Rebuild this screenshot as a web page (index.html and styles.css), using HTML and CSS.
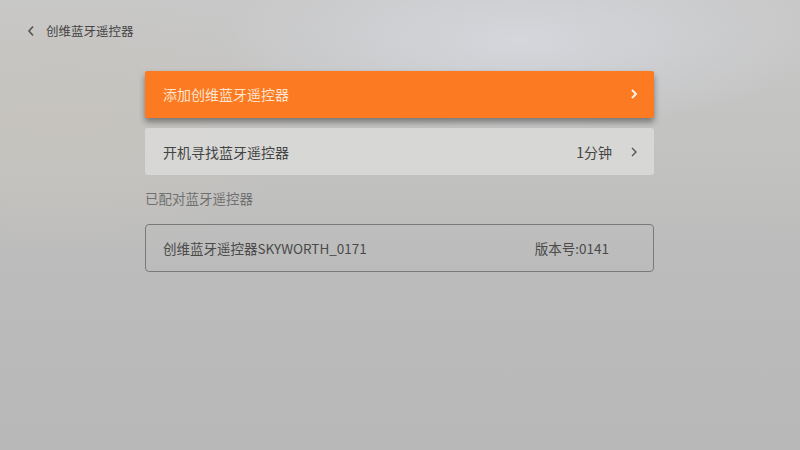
FILE: index.html
```html
<!DOCTYPE html>
<html lang="zh">
<head>
<meta charset="utf-8">
<link rel="stylesheet" href="styles.css">
</head>
<body>
<div class="screen">
  <header class="topbar">
    <svg class="back" width="8" height="12" viewBox="0 0 8 12"><path d="M6 1.5 L2 6 L6 10.5" fill="none" stroke="#555" stroke-width="1.6"/></svg>
    <span class="title">创维蓝牙遥控器</span>
  </header>
  <main class="content">
    <div class="row active">
      <span class="label">添加创维蓝牙遥控器</span>
      <svg class="chev" width="8" height="12" viewBox="0 0 8 12"><path d="M2 2 L6 6 L2 10" fill="none" stroke="#fff3e8" stroke-width="2"/></svg>
    </div>
    <div class="row plain">
      <span class="label">开机寻找蓝牙遥控器</span>
      <span class="value">1分钟</span>
      <svg class="chev" width="8" height="12" viewBox="0 0 8 12"><path d="M2 2 L6 6 L2 10" fill="none" stroke="#555" stroke-width="1.4"/></svg>
    </div>
    <div class="section">已配对蓝牙遥控器</div>
    <div class="row device">
      <span class="label">创维蓝牙遥控器SKYWORTH_0171</span>
      <span class="version">版本号:0141</span>
    </div>
  </main>
</div>
</body>
</html>
```
FILE: styles.css
```css
html, body { margin: 0; padding: 0; }
body {
  width: 800px; height: 450px; overflow: hidden;
  font-family: "Noto Sans CJK SC", Roboto, "Noto Sans", sans-serif;
}
.screen {
  width: 800px; height: 450px;
  background:
    radial-gradient(ellipse 300px 90px at 520px 40px, rgba(214,216,222,0.9), rgba(214,216,222,0) 100%),
    radial-gradient(ellipse 260px 140px at 60px 120px, rgba(200,196,188,0.7), rgba(200,196,188,0) 100%),
    linear-gradient(180deg, #c8c8c8 0%, #c2c2c1 35%, #bbbbbb 60%, #b8b8b8 100%);
}
.topbar {
  display: flex; align-items: flex-start;
  height: 63px; box-sizing: border-box;
  padding: 22px 0 0 27px;
}
.back { margin-right: 11px; margin-top: 3px; }
.title { font-size: 12.5px; color: #444; line-height: 18px; }
.content {
  width: 509px; margin-left: 145px;
  display: flex; flex-direction: column;
  margin-top: 8px;
}
.row {
  display: flex; align-items: center;
  height: 47px; box-sizing: border-box;
  padding: 0 16px 0 18px;
  font-size: 14px;
  border-radius: 3px;
}
.label { flex: 1; }
.active {
  background: #fb7a22;
  color: #ffe4cf;
  box-shadow: 0 4px 6px rgba(0,0,0,0.4);
  position: relative; z-index: 1;
  border-radius: 2px;
  padding-bottom: 2px;
}
.plain {
  margin-top: 10px;
  background: rgba(222,222,220,0.75);
  color: #444;
}
.plain .value { margin-right: 18px; }
.section {
  font-size: 13.5px; color: #707070;
  margin-top: 12px; height: 22px; line-height: 22px;
}
.device {
  margin-top: 15px;
  border: 1px solid #7a7a7a;
  border-radius: 4px;
  color: #4a4a4a;
  height: 48px;
  padding-left: 17px;
  padding-right: 44px;
  font-size: 13.5px;
}
```
